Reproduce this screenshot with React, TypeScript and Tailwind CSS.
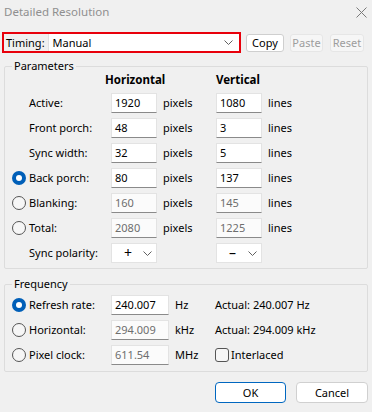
import React from "react";

const font = { fontFamily: '"Noto Sans", "Segoe UI", sans-serif' };

function Chevron() {
  return (
    <svg width="9" height="5" viewBox="0 0 9 5" className="shrink-0">
      <polyline points="0.5,0.5 4.5,4.5 8.5,0.5" fill="none" stroke="#606060" strokeWidth="1" />
    </svg>
  );
}

function Radio({ checked }: { checked?: boolean }) {
  if (checked) {
    return (
      <span className="flex h-[14px] w-[14px] items-center justify-center rounded-full bg-[#005fb8]">
        <span className="h-[6px] w-[6px] rounded-full bg-white" />
      </span>
    );
  }
  return <span className="h-[14px] w-[14px] rounded-full border border-[#555] bg-[#f6f6f6]" />;
}

function Field({ value, disabled, w = "w-[46px]" }: { value: string; disabled?: boolean; w?: string }) {
  return (
    <div
      className={`flex h-[20px] ${w} items-center border border-[#e3e3e3] border-b-[#8a8a8a] px-[3px] ${
        disabled ? "bg-[#fbfbfb] text-[#6e6e6e]" : "bg-white text-black"
      }`}
    >
      {value}
    </div>
  );
}

type Row = {
  label: string;
  radio?: "on" | "off";
  h: string;
  v: string;
  disabled?: boolean;
};

const rows: Row[] = [
  { label: "Active:", h: "1920", v: "1080" },
  { label: "Front porch:", h: "48", v: "3" },
  { label: "Sync width:", h: "32", v: "5" },
  { label: "Back porch:", radio: "on", h: "80", v: "137" },
  { label: "Blanking:", radio: "off", h: "160", v: "145", disabled: true },
  { label: "Total:", radio: "off", h: "2080", v: "1225", disabled: true },
];

function Polarity({ sign }: { sign: string }) {
  return (
    <div className="flex h-[20px] w-[46px] items-center justify-between border border-[#e3e3e3] bg-white pl-[12px] pr-[4px]">
      <span className="text-[14px] leading-none">{sign}</span>
      <Chevron />
    </div>
  );
}

export default function App() {
  return (
    <div className="h-[412px] w-[372px] overflow-hidden bg-[#f0f0f0] text-[11px] leading-[16px] text-black" style={font}>
      {/* title bar */}
      <div className="flex h-[24px] items-center justify-between pl-[4px] pr-[4px]">
        <span className="text-[11.5px] text-[#8f8f8f]">Detailed Resolution</span>
        <svg width="11" height="11" viewBox="0 0 11 11" className="mr-[1px]">
          <path d="M0.5 0.5 L10.5 10.5 M10.5 0.5 L0.5 10.5" stroke="#7a7a7a" strokeWidth="1" />
        </svg>
      </div>

      {/* timing row */}
      <div className="mt-[8px] flex h-[21px] items-center">
        <div className="ml-[2px] flex h-[21px] w-[239px] items-center border-2 border-[#e8000b] bg-white">
          <span className="flex h-full items-center bg-[#f0f0f0] pl-[2px] pr-[3px]">Timing:</span>
          <div className="flex h-full flex-1 items-center justify-between border-l border-[#e0e0e0] pl-[4px] pr-[6px]">
            <span>Manual</span>
            <Chevron />
          </div>
        </div>
        <button className="ml-[5px] flex h-[18px] w-[38px] items-center justify-center rounded-[3px] border border-[#cfcfcf] bg-white">
          Copy
        </button>
        <button className="ml-[6px] flex h-[18px] w-[33px] items-center justify-center rounded-[3px] border border-[#e6e6e6] bg-[#f6f6f6] text-[#9d9d9d]">
          Paste
        </button>
        <button className="ml-[7px] flex h-[18px] w-[34px] items-center justify-center rounded-[3px] border border-[#e6e6e6] bg-[#f6f6f6] text-[#9d9d9d]">
          Reset
        </button>
      </div>

      {/* parameters */}
      <fieldset className="mx-[4px] mt-[5px] rounded-[2px] border border-[#dcdcdc] pb-[5px]">
        <legend className="ml-[7px] px-[2px]">Parameters</legend>
        <div className="-mt-[2px] grid grid-cols-[17px_82px_46px_59px_46px_1fr] items-center gap-y-[5px] pl-[7px]">
          <span />
          <span />
          <span className="-ml-[6px] text-[11.5px] font-bold">Horizontal</span>
          <span />
          <span className="text-[11.5px] font-bold">Vertical</span>
          <span />
          {rows.map((r) => (
            <React.Fragment key={r.label}>
              <span className="flex items-center">{r.radio ? <Radio checked={r.radio === "on"} /> : null}</span>
              <span>{r.label}</span>
              <Field value={r.h} disabled={r.disabled} />
              <span className="pl-[6px]">pixels</span>
              <Field value={r.v} disabled={r.disabled} />
              <span className="pl-[6px]">lines</span>
            </React.Fragment>
          ))}
          <span />
          <span>Sync polarity:</span>
          <Polarity sign="+" />
          <span />
          <Polarity sign="–" />
          <span />
        </div>
      </fieldset>

      {/* frequency */}
      <fieldset className="mx-[4px] mt-[7px] rounded-[2px] border border-[#dcdcdc] pb-[6px]">
        <legend className="ml-[7px] px-[2px]">Frequency</legend>
        <div className="mt-[3px] grid grid-cols-[17px_82px_58px_46px_1fr] items-center gap-y-[5px] pl-[7px]">
          <span className="flex items-center"><Radio checked /></span>
          <span>Refresh rate:</span>
          <Field value="240.007" w="w-[58px]" />
          <span className="pl-[6px]">Hz</span>
          <span>Actual: 240.007 Hz</span>

          <span className="flex items-center"><Radio /></span>
          <span>Horizontal:</span>
          <Field value="294.009" w="w-[58px]" disabled />
          <span className="pl-[6px]">kHz</span>
          <span>Actual: 294.009 kHz</span>

          <span className="flex items-center"><Radio /></span>
          <span>Pixel clock:</span>
          <Field value="611.54" w="w-[58px]" disabled />
          <span className="pl-[6px]">MHz</span>
          <span className="flex items-center gap-[2px]">
            <span className="h-[14px] w-[14px] rounded-[3px] border border-[#555] bg-[#f6f6f6]" />
            Interlaced
          </span>
        </div>
      </fieldset>

      {/* buttons */}
      <div className="mt-[10px] flex justify-end gap-[10px] pr-[4px]">
        <button className="flex h-[21px] w-[71px] items-center justify-center rounded-[4px] border border-[#0067c0] bg-white">
          OK
        </button>
        <button className="flex h-[21px] w-[72px] items-center justify-center rounded-[4px] border border-[#d0d0d0] bg-white">
          Cancel
        </button>
      </div>
    </div>
  );
}
